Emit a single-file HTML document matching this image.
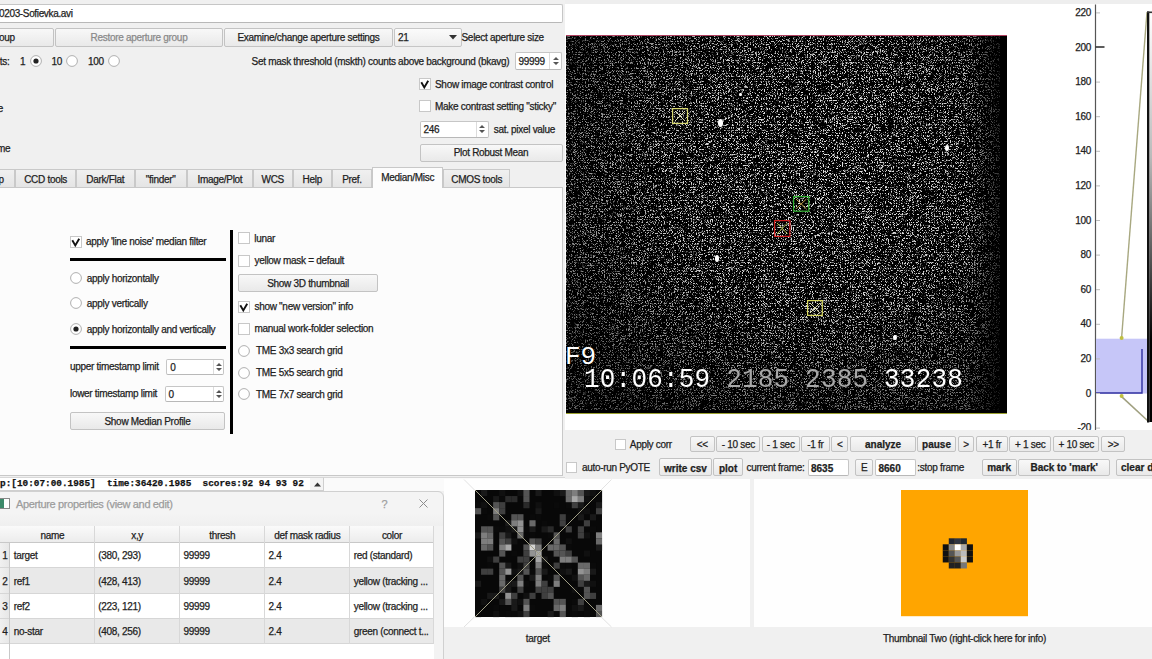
<!DOCTYPE html>
<html><head><meta charset="utf-8"><style>
html,body{margin:0;padding:0;}
body{width:1152px;height:659px;overflow:hidden;position:relative;background:#f0f0f0;font-family:"Liberation Sans",sans-serif;}
.r{position:absolute;}
.t{position:absolute;white-space:pre;line-height:1;-webkit-text-stroke:0.25px currentColor;}
svg.r{overflow:visible;}
</style></head><body>
<div class="r" style="left:0px;top:0px;width:565px;height:478px;background:#f0f0f0;"></div>
<div class="r" style="left:-3px;top:4px;width:566px;height:19px;box-sizing:border-box;border:1px solid #c6c6c6;border-bottom-color:#b8b8b8;border-radius:2px;background:#fff;"></div>
<div class="t" style="left:-1px;top:9.43px;font-size:10px;color:#1e1e1e;font-weight:normal;letter-spacing:-0.35px;font-family:"Liberation Sans", sans-serif;">0203-Sofievka.avi</div>
<div class="r" style="left:-10px;top:28px;width:64px;height:19px;box-sizing:border-box;border:1px solid #c3c3c3;border-radius:2px;background:linear-gradient(#f8f8f8,#e9e9e9);"></div>
<div class="t" style="left:-10px;width:64px;text-align:center;top:32.83px;font-size:10px;color:#1e1e1e;font-weight:normal;letter-spacing:-0.3px;"></div>
<div class="t" style="left:-1px;top:32.83px;font-size:10px;color:#1e1e1e;font-weight:normal;letter-spacing:-0.3px;font-family:"Liberation Sans", sans-serif;">oup</div>
<div class="r" style="left:0px;top:28px;width:54px;height:19px;display:none"></div>
<div class="r" style="left:55px;top:28px;width:168px;height:19px;box-sizing:border-box;border:1px solid #c3c3c3;border-radius:2px;background:linear-gradient(#f8f8f8,#e9e9e9);"></div>
<div class="t" style="left:55px;width:168px;text-align:center;top:32.83px;font-size:10px;color:#8a8a8a;font-weight:normal;letter-spacing:-0.3px;">Restore aperture group</div>
<div class="r" style="left:224px;top:28px;width:169px;height:19px;box-sizing:border-box;border:1px solid #c3c3c3;border-radius:2px;background:linear-gradient(#f8f8f8,#e9e9e9);"></div>
<div class="t" style="left:224px;width:169px;text-align:center;top:32.83px;font-size:10px;color:#1e1e1e;font-weight:normal;letter-spacing:-0.3px;">Examine/change aperture settings</div>
<div class="r" style="left:394px;top:28px;width:68px;height:19px;box-sizing:border-box;border:1px solid #c6c6c6;border-radius:2px;background:linear-gradient(#fbfbfb,#ededed);"></div>
<div class="t" style="left:398px;top:32.83px;font-size:10px;color:#1e1e1e;font-weight:normal;letter-spacing:-0.3px;font-family:"Liberation Sans", sans-serif;">21</div>
<svg class="r" style="left:449px;top:35px" width="8" height="5"><path d="M0 0 L8 0 L4 4.5 Z" fill="#333"/></svg>
<div class="t" style="left:461.5px;top:32.83px;font-size:10px;color:#1e1e1e;font-weight:normal;letter-spacing:-0.3px;font-family:"Liberation Sans", sans-serif;">Select aperture size</div>
<div class="t" style="left:-0.3px;top:56.63px;font-size:10px;color:#1e1e1e;font-weight:normal;letter-spacing:-0.3px;font-family:"Liberation Sans", sans-serif;">ts:</div>
<div class="t" style="left:20px;top:56.63px;font-size:10px;color:#1e1e1e;font-weight:normal;letter-spacing:-0.3px;font-family:"Liberation Sans", sans-serif;">1</div>
<svg class="r" style="left:29.6px;top:55px" width="12" height="12"><circle cx="6" cy="6" r="5.4" fill="#fff" stroke="#b0b0b0" stroke-width="1"/><circle cx="6" cy="6" r="2.6" fill="#222"/></svg>
<div class="t" style="left:51.5px;top:56.63px;font-size:10px;color:#1e1e1e;font-weight:normal;letter-spacing:-0.3px;font-family:"Liberation Sans", sans-serif;">10</div>
<svg class="r" style="left:66px;top:55px" width="12" height="12"><circle cx="6" cy="6" r="5.4" fill="#fff" stroke="#b0b0b0" stroke-width="1"/></svg>
<div class="t" style="left:88px;top:56.63px;font-size:10px;color:#1e1e1e;font-weight:normal;letter-spacing:-0.3px;font-family:"Liberation Sans", sans-serif;">100</div>
<svg class="r" style="left:107.7px;top:55px" width="12" height="12"><circle cx="6" cy="6" r="5.4" fill="#fff" stroke="#b0b0b0" stroke-width="1"/></svg>
<div class="t" style="left:251.6px;top:56.63px;font-size:10px;color:#1e1e1e;font-weight:normal;letter-spacing:-0.3px;font-family:"Liberation Sans", sans-serif;">Set mask threshold (mskth) counts above background (bkavg)</div>
<div class="r" style="left:514.5px;top:52px;width:47.5px;height:18px;box-sizing:border-box;border:1px solid #c6c6c6;border-bottom-color:#b8b8b8;border-radius:2px;background:#fff;"></div>
<div class="r" style="left:549px;top:53px;width:1px;height:16px;background:#dcdcdc;"></div>
<svg class="r" style="left:551.5px;top:56.0px" width="8" height="10"><path d="M1 4 L4 1 L7 4 Z M1 6 L4 9 L7 6 Z" fill="#555"/></svg>
<div class="t" style="left:518.5px;top:56.83px;font-size:10px;color:#1e1e1e;font-weight:normal;letter-spacing:-0.3px;font-family:"Liberation Sans", sans-serif;">99999</div>
<div class="r" style="left:419px;top:78px;width:12px;height:12px;box-sizing:border-box;border:1px solid #c8c8c8;background:#fff;"></div>
<svg class="r" style="left:419px;top:78px" width="12" height="12"><path d="M2.3 4.2 L5.3 9.4 L9.2 2.8" stroke="#111" stroke-width="1.9" fill="none"/></svg>
<div class="t" style="left:435px;top:79.73px;font-size:10px;color:#1e1e1e;font-weight:normal;letter-spacing:-0.3px;font-family:"Liberation Sans", sans-serif;">Show image contrast control</div>
<div class="t" style="left:-2.3px;top:103.94px;font-size:10px;color:#1e1e1e;font-weight:normal;letter-spacing:-0.3px;font-family:"Liberation Sans", sans-serif;">e</div>
<div class="r" style="left:419px;top:100px;width:12px;height:12px;box-sizing:border-box;border:1px solid #c8c8c8;background:#fff;"></div>
<div class="t" style="left:435px;top:102.03px;font-size:10px;color:#1e1e1e;font-weight:normal;letter-spacing:-0.3px;font-family:"Liberation Sans", sans-serif;">Make contrast setting "sticky"</div>
<div class="r" style="left:419.5px;top:120.5px;width:69.0px;height:17.0px;box-sizing:border-box;border:1px solid #c6c6c6;border-bottom-color:#b8b8b8;border-radius:2px;background:#fff;"></div>
<div class="r" style="left:476px;top:121.5px;width:1px;height:15.0px;background:#dcdcdc;"></div>
<svg class="r" style="left:478.2px;top:124.0px" width="8" height="10"><path d="M1 4 L4 1 L7 4 Z M1 6 L4 9 L7 6 Z" fill="#555"/></svg>
<div class="t" style="left:423.5px;top:124.84px;font-size:10px;color:#1e1e1e;font-weight:normal;letter-spacing:-0.3px;font-family:"Liberation Sans", sans-serif;">246</div>
<div class="t" style="left:493.7px;top:124.53px;font-size:10px;color:#1e1e1e;font-weight:normal;letter-spacing:-0.3px;font-family:"Liberation Sans", sans-serif;">sat. pixel value</div>
<div class="t" style="left:-3px;top:144.23px;font-size:10px;color:#1e1e1e;font-weight:normal;letter-spacing:-0.3px;font-family:"Liberation Sans", sans-serif;">me</div>
<div class="r" style="left:419.5px;top:144px;width:143.0px;height:17.5px;box-sizing:border-box;border:1px solid #c3c3c3;border-radius:2px;background:linear-gradient(#f8f8f8,#e9e9e9);"></div>
<div class="t" style="left:419.5px;width:143.0px;text-align:center;top:148.03px;font-size:10px;color:#1e1e1e;font-weight:normal;letter-spacing:-0.3px;">Plot Robust Mean</div>
<div class="r" style="left:-40px;top:169px;width:55.3px;height:18.5px;box-sizing:border-box;border:1px solid #c9c9c9;border-bottom:none;background:linear-gradient(#f0f0f0,#e4e4e4);"></div>
<div class="t" style="left:-40px;width:55.3px;text-align:center;top:174.63px;font-size:10px;color:#1e1e1e;font-weight:normal;letter-spacing:-0.3px;"></div>
<div class="r" style="left:15.3px;top:169px;width:60.7px;height:18.5px;box-sizing:border-box;border:1px solid #c9c9c9;border-bottom:none;background:linear-gradient(#f0f0f0,#e4e4e4);"></div>
<div class="t" style="left:15.3px;width:60.7px;text-align:center;top:174.63px;font-size:10px;color:#1e1e1e;font-weight:normal;letter-spacing:-0.3px;">CCD tools</div>
<div class="r" style="left:76px;top:169px;width:58.5px;height:18.5px;box-sizing:border-box;border:1px solid #c9c9c9;border-bottom:none;background:linear-gradient(#f0f0f0,#e4e4e4);"></div>
<div class="t" style="left:76px;width:58.5px;text-align:center;top:174.63px;font-size:10px;color:#1e1e1e;font-weight:normal;letter-spacing:-0.3px;">Dark/Flat</div>
<div class="r" style="left:134.5px;top:169px;width:52.30000000000001px;height:18.5px;box-sizing:border-box;border:1px solid #c9c9c9;border-bottom:none;background:linear-gradient(#f0f0f0,#e4e4e4);"></div>
<div class="t" style="left:134.5px;width:52.30000000000001px;text-align:center;top:174.63px;font-size:10px;color:#1e1e1e;font-weight:normal;letter-spacing:-0.3px;">"finder"</div>
<div class="r" style="left:186.8px;top:169px;width:66.19999999999999px;height:18.5px;box-sizing:border-box;border:1px solid #c9c9c9;border-bottom:none;background:linear-gradient(#f0f0f0,#e4e4e4);"></div>
<div class="t" style="left:186.8px;width:66.19999999999999px;text-align:center;top:174.63px;font-size:10px;color:#1e1e1e;font-weight:normal;letter-spacing:-0.3px;">Image/Plot</div>
<div class="r" style="left:253px;top:169px;width:39.5px;height:18.5px;box-sizing:border-box;border:1px solid #c9c9c9;border-bottom:none;background:linear-gradient(#f0f0f0,#e4e4e4);"></div>
<div class="t" style="left:253px;width:39.5px;text-align:center;top:174.63px;font-size:10px;color:#1e1e1e;font-weight:normal;letter-spacing:-0.3px;">WCS</div>
<div class="r" style="left:292.5px;top:169px;width:39.5px;height:18.5px;box-sizing:border-box;border:1px solid #c9c9c9;border-bottom:none;background:linear-gradient(#f0f0f0,#e4e4e4);"></div>
<div class="t" style="left:292.5px;width:39.5px;text-align:center;top:174.63px;font-size:10px;color:#1e1e1e;font-weight:normal;letter-spacing:-0.3px;">Help</div>
<div class="r" style="left:332px;top:169px;width:40px;height:18.5px;box-sizing:border-box;border:1px solid #c9c9c9;border-bottom:none;background:linear-gradient(#f0f0f0,#e4e4e4);"></div>
<div class="t" style="left:332px;width:40px;text-align:center;top:174.63px;font-size:10px;color:#1e1e1e;font-weight:normal;letter-spacing:-0.3px;">Pref.</div>
<div class="r" style="left:443.4px;top:169px;width:66.60000000000002px;height:18.5px;box-sizing:border-box;border:1px solid #c9c9c9;border-bottom:none;background:linear-gradient(#f0f0f0,#e4e4e4);"></div>
<div class="t" style="left:443.4px;width:66.60000000000002px;text-align:center;top:174.63px;font-size:10px;color:#1e1e1e;font-weight:normal;letter-spacing:-0.3px;">CMOS tools</div>
<div class="t" style="left:-1.5px;top:174.63px;font-size:10px;color:#1e1e1e;font-weight:normal;letter-spacing:-0.3px;font-family:"Liberation Sans", sans-serif;">p</div>
<div class="r" style="left:-2px;top:186.5px;width:564.5px;height:289.0px;box-sizing:border-box;border:1px solid #c8c8c8;background:#fcfcfc;"></div>
<div class="r" style="left:372px;top:167px;width:71.39999999999998px;height:21px;box-sizing:border-box;border:1px solid #c8c8c8;border-bottom:none;background:#fcfcfc;"></div>
<div class="t" style="left:372px;width:71.39999999999998px;text-align:center;top:173.13px;font-size:10px;color:#1e1e1e;font-weight:normal;letter-spacing:-0.3px;">Median/Misc</div>
<div class="r" style="left:70px;top:235.5px;width:12px;height:12.0px;box-sizing:border-box;border:1px solid #c8c8c8;background:#fff;"></div>
<svg class="r" style="left:70px;top:235.5px" width="12" height="12"><path d="M2.3 4.2 L5.3 9.4 L9.2 2.8" stroke="#111" stroke-width="1.9" fill="none"/></svg>
<div class="t" style="left:86px;top:237.13px;font-size:10px;color:#1e1e1e;font-weight:normal;letter-spacing:-0.3px;font-family:"Liberation Sans", sans-serif;">apply 'line noise' median filter</div>
<div class="r" style="left:70px;top:258px;width:155.5px;height:3px;background:#000;"></div>
<svg class="r" style="left:69.7px;top:272.2px" width="12" height="12"><circle cx="6" cy="6" r="5.4" fill="#fff" stroke="#b0b0b0" stroke-width="1"/></svg>
<div class="t" style="left:86.8px;top:273.84px;font-size:10px;color:#1e1e1e;font-weight:normal;letter-spacing:-0.3px;font-family:"Liberation Sans", sans-serif;">apply horizontally</div>
<svg class="r" style="left:69.7px;top:297.4px" width="12" height="12"><circle cx="6" cy="6" r="5.4" fill="#fff" stroke="#b0b0b0" stroke-width="1"/></svg>
<div class="t" style="left:86.8px;top:299.04px;font-size:10px;color:#1e1e1e;font-weight:normal;letter-spacing:-0.3px;font-family:"Liberation Sans", sans-serif;">apply vertically</div>
<svg class="r" style="left:69.7px;top:322.9px" width="12" height="12"><circle cx="6" cy="6" r="5.4" fill="#fff" stroke="#b0b0b0" stroke-width="1"/><circle cx="6" cy="6" r="2.6" fill="#222"/></svg>
<div class="t" style="left:86.8px;top:324.54px;font-size:10px;color:#1e1e1e;font-weight:normal;letter-spacing:-0.3px;font-family:"Liberation Sans", sans-serif;">apply horizontally and vertically</div>
<div class="r" style="left:70px;top:346px;width:155.5px;height:3px;background:#000;"></div>
<div class="t" style="left:70px;top:362.34px;font-size:10px;color:#1e1e1e;font-weight:normal;letter-spacing:-0.3px;font-family:"Liberation Sans", sans-serif;">upper timestamp limit</div>
<div class="r" style="left:166.3px;top:358.6px;width:58.19999999999999px;height:16.399999999999977px;box-sizing:border-box;border:1px solid #c6c6c6;border-bottom-color:#b8b8b8;border-radius:2px;background:#fff;"></div>
<div class="r" style="left:212.7px;top:359.6px;width:1.0px;height:14.399999999999977px;background:#dcdcdc;"></div>
<svg class="r" style="left:214.6px;top:361.8px" width="8" height="10"><path d="M1 4 L4 1 L7 4 Z M1 6 L4 9 L7 6 Z" fill="#555"/></svg>
<div class="t" style="left:170.3px;top:362.64px;font-size:10px;color:#1e1e1e;font-weight:normal;letter-spacing:-0.3px;font-family:"Liberation Sans", sans-serif;">0</div>
<div class="t" style="left:70px;top:389.24px;font-size:10px;color:#1e1e1e;font-weight:normal;letter-spacing:-0.3px;font-family:"Liberation Sans", sans-serif;">lower timestamp limit</div>
<div class="r" style="left:164.6px;top:385.6px;width:59.900000000000006px;height:16.19999999999999px;box-sizing:border-box;border:1px solid #c6c6c6;border-bottom-color:#b8b8b8;border-radius:2px;background:#fff;"></div>
<div class="r" style="left:212.7px;top:386.6px;width:1.0px;height:14.199999999999989px;background:#dcdcdc;"></div>
<svg class="r" style="left:214.6px;top:388.7px" width="8" height="10"><path d="M1 4 L4 1 L7 4 Z M1 6 L4 9 L7 6 Z" fill="#555"/></svg>
<div class="t" style="left:168.6px;top:389.54px;font-size:10px;color:#1e1e1e;font-weight:normal;letter-spacing:-0.3px;font-family:"Liberation Sans", sans-serif;">0</div>
<div class="r" style="left:70px;top:412px;width:155px;height:18px;box-sizing:border-box;border:1px solid #c3c3c3;border-radius:2px;background:linear-gradient(#f8f8f8,#e9e9e9);"></div>
<div class="t" style="left:70px;width:155px;text-align:center;top:416.64px;font-size:10px;color:#1e1e1e;font-weight:normal;letter-spacing:-0.3px;">Show Median Profile</div>
<div class="r" style="left:230.3px;top:230px;width:3.0px;height:204px;background:#000;"></div>
<div class="r" style="left:238px;top:232.3px;width:12px;height:12.0px;box-sizing:border-box;border:1px solid #c8c8c8;background:#fff;"></div>
<div class="t" style="left:254.3px;top:233.84px;font-size:10px;color:#1e1e1e;font-weight:normal;letter-spacing:-0.3px;font-family:"Liberation Sans", sans-serif;">lunar</div>
<div class="r" style="left:238px;top:254.5px;width:12px;height:12.0px;box-sizing:border-box;border:1px solid #c8c8c8;background:#fff;"></div>
<div class="t" style="left:254.5px;top:256.03px;font-size:10px;color:#1e1e1e;font-weight:normal;letter-spacing:-0.3px;font-family:"Liberation Sans", sans-serif;">yellow mask = default</div>
<div class="r" style="left:238px;top:274.4px;width:140px;height:17.80000000000001px;box-sizing:border-box;border:1px solid #c3c3c3;border-radius:2px;background:linear-gradient(#f8f8f8,#e9e9e9);"></div>
<div class="t" style="left:238px;width:140px;text-align:center;top:279.04px;font-size:10px;color:#1e1e1e;font-weight:normal;letter-spacing:-0.3px;">Show 3D thumbnail</div>
<div class="r" style="left:238px;top:300.5px;width:12px;height:12.0px;box-sizing:border-box;border:1px solid #c8c8c8;background:#fff;"></div>
<svg class="r" style="left:238px;top:300.5px" width="12" height="12"><path d="M2.3 4.2 L5.3 9.4 L9.2 2.8" stroke="#111" stroke-width="1.9" fill="none"/></svg>
<div class="t" style="left:254.5px;top:301.84px;font-size:10px;color:#1e1e1e;font-weight:normal;letter-spacing:-0.3px;font-family:"Liberation Sans", sans-serif;">show "new version" info</div>
<div class="r" style="left:238px;top:322.7px;width:12px;height:12.0px;box-sizing:border-box;border:1px solid #c8c8c8;background:#fff;"></div>
<div class="t" style="left:254.5px;top:324.04px;font-size:10px;color:#1e1e1e;font-weight:normal;letter-spacing:-0.3px;font-family:"Liberation Sans", sans-serif;">manual work-folder selection</div>
<svg class="r" style="left:237.8px;top:344.5px" width="12" height="12"><circle cx="6" cy="6" r="5.4" fill="#fff" stroke="#b0b0b0" stroke-width="1"/></svg>
<div class="t" style="left:256px;top:346.24px;font-size:10px;color:#1e1e1e;font-weight:normal;letter-spacing:-0.3px;font-family:"Liberation Sans", sans-serif;">TME 3x3 search grid</div>
<svg class="r" style="left:237.8px;top:366.5px" width="12" height="12"><circle cx="6" cy="6" r="5.4" fill="#fff" stroke="#b0b0b0" stroke-width="1"/></svg>
<div class="t" style="left:256px;top:368.24px;font-size:10px;color:#1e1e1e;font-weight:normal;letter-spacing:-0.3px;font-family:"Liberation Sans", sans-serif;">TME 5x5 search grid</div>
<svg class="r" style="left:237.8px;top:388.2px" width="12" height="12"><circle cx="6" cy="6" r="5.4" fill="#fff" stroke="#b0b0b0" stroke-width="1"/></svg>
<div class="t" style="left:256px;top:389.94px;font-size:10px;color:#1e1e1e;font-weight:normal;letter-spacing:-0.3px;font-family:"Liberation Sans", sans-serif;">TME 7x7 search grid</div>
<div class="r" style="left:0px;top:476px;width:565px;height:183px;background:#f0f0f0;"></div>
<div class="r" style="left:-2px;top:477px;width:326px;height:14px;box-sizing:border-box;border:1px solid #cfcfcf;border-top-color:#d8d8d8;background:#fff;"></div>
<div class="r" style="left:0;top:477px;width:312px;height:13px;overflow:hidden;"><div class="t" style="left:0;top:1.5px;font-family:'Liberation Mono',monospace;font-weight:bold;font-size:9.4px;color:#111;white-space:pre;">p:[10:07:00.1985]  time:36420.1985  scores:92 94 93 92</div></div>
<div class="r" style="left:310px;top:478px;width:13px;height:12px;background:#f4f4f4;"></div>
<svg class="r" style="left:313.5px;top:482px" width="7" height="5"><path d="M0 4.5 L3.5 0.5 L7 4.5 Z" fill="#333"/></svg>
<div class="r" style="left:324px;top:477px;width:241px;height:14px;background:#fafafa;border-top:1px solid #d8d8d8;box-sizing:border-box;"></div>
<div class="r" style="left:-5px;top:491px;width:449px;height:174px;box-sizing:border-box;border:1px solid #d0d0d0;border-radius:6px;background:linear-gradient(#f4f4f4 0,#f4f4f4 21px,#efefef 35px);"></div>
<div class="r" style="left:-2px;top:497.5px;width:12px;height:11.0px;box-sizing:border-box;border:1px solid #888;background:linear-gradient(90deg,#3d8a6a 0,#3d8a6a 55%,#fff 55%);"></div>
<div class="t" style="left:16px;top:498.59px;font-size:11px;color:#9c9c9c;font-weight:normal;letter-spacing:-0.35px;font-family:"Liberation Sans", sans-serif;">Aperture properties (view and edit)</div>
<div class="t" style="left:381.5px;top:498.69px;font-size:11px;color:#a0a0a0;font-weight:normal;letter-spacing:0px;font-family:"Liberation Sans", sans-serif;">?</div>
<svg class="r" style="left:419px;top:498.5px" width="9" height="9"><path d="M0.5 0.5 L8.5 8.5 M8.5 0.5 L0.5 8.5" stroke="#8c8c8c" stroke-width="1"/></svg>
<div class="r" style="left:-2px;top:526px;width:436px;height:133px;background:#fff;"></div>
<div class="r" style="left:-2px;top:526px;width:436px;height:17px;background:linear-gradient(#fafafa,#ececec);border-bottom:1px solid #c8c8c8;box-sizing:border-box;"></div>
<div class="r" style="left:93.6px;top:526px;width:1.0px;height:17px;background:#d8d8d8;"></div>
<div class="t" style="left:10px;width:84.6px;text-align:center;top:530.53px;font-size:10px;color:#1e1e1e;font-weight:normal;letter-spacing:-0.3px;">name</div>
<div class="r" style="left:178.7px;top:526px;width:1.0px;height:17px;background:#d8d8d8;"></div>
<div class="t" style="left:94.6px;width:85.1px;text-align:center;top:530.53px;font-size:10px;color:#1e1e1e;font-weight:normal;letter-spacing:-0.3px;">x,y</div>
<div class="r" style="left:263.8px;top:526px;width:1.0px;height:17px;background:#d8d8d8;"></div>
<div class="t" style="left:179.7px;width:85.10000000000002px;text-align:center;top:530.53px;font-size:10px;color:#1e1e1e;font-weight:normal;letter-spacing:-0.3px;">thresh</div>
<div class="r" style="left:349px;top:526px;width:1px;height:17px;background:#d8d8d8;"></div>
<div class="t" style="left:264.8px;width:85.19999999999999px;text-align:center;top:530.53px;font-size:10px;color:#1e1e1e;font-weight:normal;letter-spacing:-0.3px;">def mask radius</div>
<div class="r" style="left:433px;top:526px;width:1px;height:17px;background:#d8d8d8;"></div>
<div class="t" style="left:350px;width:84px;text-align:center;top:530.53px;font-size:10px;color:#1e1e1e;font-weight:normal;letter-spacing:-0.3px;">color</div>
<div class="r" style="left:10px;top:543px;width:424px;height:25.299999999999955px;background:#ffffff;"></div>
<div class="r" style="left:-2px;top:543px;width:12px;height:25.299999999999955px;background:linear-gradient(90deg,#f2f2f2,#e6e6e6);"></div>
<div class="r" style="left:-2px;top:567.3px;width:436px;height:1.0px;background:#d6d6d6;"></div>
<div class="r" style="left:93.6px;top:543px;width:1.0px;height:25.299999999999955px;background:#d8d8d8;"></div>
<div class="r" style="left:178.7px;top:543px;width:1.0px;height:25.299999999999955px;background:#d8d8d8;"></div>
<div class="r" style="left:263.8px;top:543px;width:1.0px;height:25.299999999999955px;background:#d8d8d8;"></div>
<div class="r" style="left:349px;top:543px;width:1px;height:25.299999999999955px;background:#d8d8d8;"></div>
<div class="r" style="left:433px;top:543px;width:1px;height:25.299999999999955px;background:#d8d8d8;"></div>
<div class="t" style="left:0px;width:10px;text-align:center;top:551.48px;font-size:10px;color:#1e1e1e;font-weight:normal;letter-spacing:-0.3px;">1</div>
<div class="t" style="left:13.7px;top:551.48px;font-size:10px;color:#1e1e1e;font-weight:normal;letter-spacing:-0.3px;font-family:"Liberation Sans", sans-serif;">target</div>
<div class="t" style="left:98.3px;top:551.48px;font-size:10px;color:#1e1e1e;font-weight:normal;letter-spacing:-0.3px;font-family:"Liberation Sans", sans-serif;">(380, 293)</div>
<div class="t" style="left:183.39999999999998px;top:551.48px;font-size:10px;color:#1e1e1e;font-weight:normal;letter-spacing:-0.3px;font-family:"Liberation Sans", sans-serif;">99999</div>
<div class="t" style="left:268.5px;top:551.48px;font-size:10px;color:#1e1e1e;font-weight:normal;letter-spacing:-0.3px;font-family:"Liberation Sans", sans-serif;">2.4</div>
<div class="t" style="left:353.7px;top:551.48px;font-size:10px;color:#1e1e1e;font-weight:normal;letter-spacing:-0.3px;font-family:"Liberation Sans", sans-serif;">red (standard)</div>
<div class="r" style="left:10px;top:568.3px;width:424px;height:25.600000000000023px;background:#e9e9e9;"></div>
<div class="r" style="left:-2px;top:568.3px;width:12px;height:25.600000000000023px;background:linear-gradient(90deg,#f2f2f2,#e6e6e6);"></div>
<div class="r" style="left:-2px;top:592.9px;width:436px;height:1.0px;background:#d6d6d6;"></div>
<div class="r" style="left:93.6px;top:568.3px;width:1.0px;height:25.600000000000023px;background:#d8d8d8;"></div>
<div class="r" style="left:178.7px;top:568.3px;width:1.0px;height:25.600000000000023px;background:#d8d8d8;"></div>
<div class="r" style="left:263.8px;top:568.3px;width:1.0px;height:25.600000000000023px;background:#d8d8d8;"></div>
<div class="r" style="left:349px;top:568.3px;width:1px;height:25.600000000000023px;background:#d8d8d8;"></div>
<div class="r" style="left:433px;top:568.3px;width:1px;height:25.600000000000023px;background:#d8d8d8;"></div>
<div class="t" style="left:0px;width:10px;text-align:center;top:576.93px;font-size:10px;color:#1e1e1e;font-weight:normal;letter-spacing:-0.3px;">2</div>
<div class="t" style="left:13.7px;top:576.93px;font-size:10px;color:#1e1e1e;font-weight:normal;letter-spacing:-0.3px;font-family:"Liberation Sans", sans-serif;">ref1</div>
<div class="t" style="left:98.3px;top:576.93px;font-size:10px;color:#1e1e1e;font-weight:normal;letter-spacing:-0.3px;font-family:"Liberation Sans", sans-serif;">(428, 413)</div>
<div class="t" style="left:183.39999999999998px;top:576.93px;font-size:10px;color:#1e1e1e;font-weight:normal;letter-spacing:-0.3px;font-family:"Liberation Sans", sans-serif;">99999</div>
<div class="t" style="left:268.5px;top:576.93px;font-size:10px;color:#1e1e1e;font-weight:normal;letter-spacing:-0.3px;font-family:"Liberation Sans", sans-serif;">2.4</div>
<div class="t" style="left:353.7px;top:576.93px;font-size:10px;color:#1e1e1e;font-weight:normal;letter-spacing:-0.3px;font-family:"Liberation Sans", sans-serif;">yellow (tracking ...</div>
<div class="r" style="left:10px;top:593.9px;width:424px;height:24.800000000000068px;background:#ffffff;"></div>
<div class="r" style="left:-2px;top:593.9px;width:12px;height:24.800000000000068px;background:linear-gradient(90deg,#f2f2f2,#e6e6e6);"></div>
<div class="r" style="left:-2px;top:617.7px;width:436px;height:1.0px;background:#d6d6d6;"></div>
<div class="r" style="left:93.6px;top:593.9px;width:1.0px;height:24.800000000000068px;background:#d8d8d8;"></div>
<div class="r" style="left:178.7px;top:593.9px;width:1.0px;height:24.800000000000068px;background:#d8d8d8;"></div>
<div class="r" style="left:263.8px;top:593.9px;width:1.0px;height:24.800000000000068px;background:#d8d8d8;"></div>
<div class="r" style="left:349px;top:593.9px;width:1px;height:24.800000000000068px;background:#d8d8d8;"></div>
<div class="r" style="left:433px;top:593.9px;width:1px;height:24.800000000000068px;background:#d8d8d8;"></div>
<div class="t" style="left:0px;width:10px;text-align:center;top:602.13px;font-size:10px;color:#1e1e1e;font-weight:normal;letter-spacing:-0.3px;">3</div>
<div class="t" style="left:13.7px;top:602.13px;font-size:10px;color:#1e1e1e;font-weight:normal;letter-spacing:-0.3px;font-family:"Liberation Sans", sans-serif;">ref2</div>
<div class="t" style="left:98.3px;top:602.13px;font-size:10px;color:#1e1e1e;font-weight:normal;letter-spacing:-0.3px;font-family:"Liberation Sans", sans-serif;">(223, 121)</div>
<div class="t" style="left:183.39999999999998px;top:602.13px;font-size:10px;color:#1e1e1e;font-weight:normal;letter-spacing:-0.3px;font-family:"Liberation Sans", sans-serif;">99999</div>
<div class="t" style="left:268.5px;top:602.13px;font-size:10px;color:#1e1e1e;font-weight:normal;letter-spacing:-0.3px;font-family:"Liberation Sans", sans-serif;">2.4</div>
<div class="t" style="left:353.7px;top:602.13px;font-size:10px;color:#1e1e1e;font-weight:normal;letter-spacing:-0.3px;font-family:"Liberation Sans", sans-serif;">yellow (tracking ...</div>
<div class="r" style="left:10px;top:618.7px;width:424px;height:25.299999999999955px;background:#e9e9e9;"></div>
<div class="r" style="left:-2px;top:618.7px;width:12px;height:25.299999999999955px;background:linear-gradient(90deg,#f2f2f2,#e6e6e6);"></div>
<div class="r" style="left:-2px;top:643px;width:436px;height:1px;background:#d6d6d6;"></div>
<div class="r" style="left:93.6px;top:618.7px;width:1.0px;height:25.299999999999955px;background:#d8d8d8;"></div>
<div class="r" style="left:178.7px;top:618.7px;width:1.0px;height:25.299999999999955px;background:#d8d8d8;"></div>
<div class="r" style="left:263.8px;top:618.7px;width:1.0px;height:25.299999999999955px;background:#d8d8d8;"></div>
<div class="r" style="left:349px;top:618.7px;width:1px;height:25.299999999999955px;background:#d8d8d8;"></div>
<div class="r" style="left:433px;top:618.7px;width:1px;height:25.299999999999955px;background:#d8d8d8;"></div>
<div class="t" style="left:0px;width:10px;text-align:center;top:627.18px;font-size:10px;color:#1e1e1e;font-weight:normal;letter-spacing:-0.3px;">4</div>
<div class="t" style="left:13.7px;top:627.18px;font-size:10px;color:#1e1e1e;font-weight:normal;letter-spacing:-0.3px;font-family:"Liberation Sans", sans-serif;">no-star</div>
<div class="t" style="left:98.3px;top:627.18px;font-size:10px;color:#1e1e1e;font-weight:normal;letter-spacing:-0.3px;font-family:"Liberation Sans", sans-serif;">(408, 256)</div>
<div class="t" style="left:183.39999999999998px;top:627.18px;font-size:10px;color:#1e1e1e;font-weight:normal;letter-spacing:-0.3px;font-family:"Liberation Sans", sans-serif;">99999</div>
<div class="t" style="left:268.5px;top:627.18px;font-size:10px;color:#1e1e1e;font-weight:normal;letter-spacing:-0.3px;font-family:"Liberation Sans", sans-serif;">2.4</div>
<div class="t" style="left:353.7px;top:627.18px;font-size:10px;color:#1e1e1e;font-weight:normal;letter-spacing:-0.3px;font-family:"Liberation Sans", sans-serif;">green (connect t...</div>
<div class="r" style="left:9px;top:543px;width:1px;height:116px;background:#c8c8c8;"></div>
<div class="r" style="left:434px;top:526px;width:9px;height:133px;background:#f3f3f3;"></div>
<div class="r" style="left:443px;top:500px;width:1px;height:159px;background:#d0d0d0;"></div>
<div class="r" style="left:565px;top:0px;width:587px;height:430px;background:#fff;"></div>
<div class="r" style="left:565px;top:0px;width:587px;height:4px;background:#eeeeee;"></div>
<svg class="r" style="left:566px;top:35px" width="440.5" height="379" shape-rendering="crispEdges">
<defs>
<filter id="nz" x="0" y="0" width="100%" height="100%" filterUnits="userSpaceOnUse" color-interpolation-filters="sRGB">
<feTurbulence type="turbulence" baseFrequency="0.63" numOctaves="2" seed="5"/>
<feColorMatrix type="matrix" values="0 0 0 0 0.92  0 0 0 0 0.92  0 0 0 0 0.92  5 0 0 0 -1.47"/>
</filter>
<radialGradient id="vg" cx="0.58" cy="0.38" r="0.72">
<stop offset="0" stop-color="#000" stop-opacity="0"/>
<stop offset="0.5" stop-color="#000" stop-opacity="0.12"/>
<stop offset="1" stop-color="#000" stop-opacity="0.6"/>
</radialGradient>
<linearGradient id="rgt" x1="0" y1="0" x2="1" y2="0"><stop offset="0" stop-color="#000" stop-opacity="0"/><stop offset="1" stop-color="#000" stop-opacity="0.75"/></linearGradient>
</defs>
<rect width="440.5" height="379" fill="#000"/>
<rect width="440.5" height="379" filter="url(#nz)"/>
<rect width="440.5" height="379" fill="url(#vg)"/>
<rect x="400.5" y="0" width="33" height="379" fill="url(#rgt)"/>
<rect x="433.5" y="0" width="7" height="379" fill="#000"/>
<rect x="0" y="0" width="440.5" height="1" fill="#b04060"/>
<rect x="0" y="375" width="440.5" height="3" fill="#000"/>
<rect x="0" y="378" width="440.5" height="1" fill="#9aa030"/>
</svg>
<div class="r" style="left:718.1px;top:119.0px;width:5.1px;height:7.5px;border-radius:50%;background:#fff;"></div>
<div class="r" style="left:945.1px;top:144.5px;width:4.2px;height:6.2px;border-radius:50%;background:#fff;"></div>
<div class="r" style="left:714.5px;top:254.9px;width:4.8px;height:7.0px;border-radius:50%;background:#fff;"></div>
<div class="r" style="left:892.9px;top:334.6px;width:3.9px;height:5.8px;border-radius:50%;background:#fff;"></div>
<div class="r" style="left:739.4px;top:92.9px;width:2.2px;height:3.2px;border-radius:50%;background:#fff;"></div>
<svg class="r" style="left:671.7px;top:107.5px" width="16.09999999999991" height="16.0"><rect x="0.6" y="0.6" width="14.89999999999991" height="14.8" fill="none" stroke="#d8d870" stroke-width="1.2"/><path d="M3 3 L13.099999999999909 13.0 M13.099999999999909 3 L3 13.0" stroke="#e8e8c0" stroke-width="1"/></svg>
<svg class="r" style="left:793.3px;top:196px" width="16.40000000000009" height="15.800000000000011"><rect x="0.6" y="0.6" width="15.200000000000092" height="14.600000000000012" fill="none" stroke="#30b030" stroke-width="1.2"/><path d="M3 3 L13.400000000000091 12.800000000000011 M13.400000000000091 3 L3 12.800000000000011" stroke="#c0a050" stroke-width="1"/></svg>
<svg class="r" style="left:774px;top:220px" width="16.5" height="17"><rect x="0.6" y="0.6" width="15.3" height="15.8" fill="none" stroke="#d02020" stroke-width="1.2"/><path d="M3 3 L13.5 14 M13.5 3 L3 14" stroke="#b0c050" stroke-width="1"/></svg>
<svg class="r" style="left:806.5px;top:299.6px" width="15.899999999999977" height="16.0"><rect x="0.6" y="0.6" width="14.699999999999978" height="14.8" fill="none" stroke="#d8d860" stroke-width="1.2"/><path d="M3 3 L12.899999999999977 13.0 M12.899999999999977 3 L3 13.0" stroke="#e0e0b0" stroke-width="1"/></svg>
<div class="t" style="left:565px;top:343.5px;font-family:'Liberation Mono', monospace;font-size:26px;color:#fff;letter-spacing:0px;-webkit-text-stroke:0px #fff;text-shadow:0 0 1.5px #000,0 0 1px #000;transform:scaleY(1.0);transform-origin:0 0;">F9</div>
<div class="t" style="left:584px;top:365.6px;font-family:'Liberation Mono', monospace;font-size:26px;color:#fff;letter-spacing:0.19px;-webkit-text-stroke:0px #fff;text-shadow:0 0 1.5px #000,0 0 1px #000;white-space:pre;transform:scaleY(1.065);transform-origin:0 0;">10:06:59 <span style="color:#a8a8a8;-webkit-text-stroke:0px #a8a8a8">2185 2385</span> 33238</div>
<svg class="r" style="left:1040px;top:0" width="112" height="432">
<line x1="55.5" y1="4.5" x2="55.5" y2="432" stroke="#555" stroke-width="1.2"/>
<line x1="55.5" y1="47" x2="64.5" y2="47" stroke="#333" stroke-width="1.6"/>
<rect x="56" y="338.7" width="51" height="54.8" fill="#c6c6f8"/>
<path d="M56 393 L102 393 L102 349" stroke="#3030a0" stroke-width="1.4" fill="none"/>
<path d="M107 12 L81.6 337.8" stroke="#a8a880" stroke-width="1.4" fill="none"/>
<path d="M81.6 396.7 L108 421" stroke="#a0a080" stroke-width="1.6" fill="none"/>
<circle cx="81.6" cy="338" r="2" fill="#c0c040"/>
<circle cx="81.6" cy="396" r="2" fill="#c0c040"/>
<defs><linearGradient id="rg" x1="0" y1="0" x2="0" y2="1"><stop offset="0" stop-color="#fff"/><stop offset="0.35" stop-color="#bbb"/><stop offset="0.6" stop-color="#555"/><stop offset="0.8" stop-color="#000"/></linearGradient></defs>
<rect x="109.3" y="13" width="2.7" height="409" fill="url(#rg)"/>
<rect x="107" y="11.5" width="2.3" height="411" fill="#111"/>
<rect x="107" y="11.5" width="5" height="1.6" fill="#333"/>

<line x1="56" y1="12.9" x2="60" y2="12.9" stroke="#bbb" stroke-width="1"/>
<line x1="56" y1="82.1" x2="60" y2="82.1" stroke="#bbb" stroke-width="1"/>
<line x1="56" y1="116.7" x2="60" y2="116.7" stroke="#bbb" stroke-width="1"/>
<line x1="56" y1="151.3" x2="60" y2="151.3" stroke="#bbb" stroke-width="1"/>
<line x1="56" y1="185.9" x2="60" y2="185.9" stroke="#bbb" stroke-width="1"/>
<line x1="56" y1="220.5" x2="60" y2="220.5" stroke="#bbb" stroke-width="1"/>
<line x1="56" y1="255.1" x2="60" y2="255.1" stroke="#bbb" stroke-width="1"/>
<line x1="56" y1="289.7" x2="60" y2="289.7" stroke="#bbb" stroke-width="1"/>
<line x1="56" y1="324.3" x2="60" y2="324.3" stroke="#bbb" stroke-width="1"/>
<line x1="56" y1="358.9" x2="60" y2="358.9" stroke="#bbb" stroke-width="1"/>
<line x1="56" y1="393.5" x2="60" y2="393.5" stroke="#bbb" stroke-width="1"/>
<line x1="56" y1="428.1" x2="60" y2="428.1" stroke="#bbb" stroke-width="1"/>
</svg>
<div class="t" style="left:1040px;width:51px;text-align:right;top:8.0px;font-size:10px;color:#222;letter-spacing:-0.3px;">220</div>
<div class="t" style="left:1040px;width:51px;text-align:right;top:42.6px;font-size:10px;color:#222;letter-spacing:-0.3px;">200</div>
<div class="t" style="left:1040px;width:51px;text-align:right;top:77.2px;font-size:10px;color:#222;letter-spacing:-0.3px;">180</div>
<div class="t" style="left:1040px;width:51px;text-align:right;top:111.8px;font-size:10px;color:#222;letter-spacing:-0.3px;">160</div>
<div class="t" style="left:1040px;width:51px;text-align:right;top:146.4px;font-size:10px;color:#222;letter-spacing:-0.3px;">140</div>
<div class="t" style="left:1040px;width:51px;text-align:right;top:181.0px;font-size:10px;color:#222;letter-spacing:-0.3px;">120</div>
<div class="t" style="left:1040px;width:51px;text-align:right;top:215.6px;font-size:10px;color:#222;letter-spacing:-0.3px;">100</div>
<div class="t" style="left:1040px;width:51px;text-align:right;top:250.2px;font-size:10px;color:#222;letter-spacing:-0.3px;">80</div>
<div class="t" style="left:1040px;width:51px;text-align:right;top:284.8px;font-size:10px;color:#222;letter-spacing:-0.3px;">60</div>
<div class="t" style="left:1040px;width:51px;text-align:right;top:319.4px;font-size:10px;color:#222;letter-spacing:-0.3px;">40</div>
<div class="t" style="left:1040px;width:51px;text-align:right;top:354.0px;font-size:10px;color:#222;letter-spacing:-0.3px;">20</div>
<div class="t" style="left:1040px;width:51px;text-align:right;top:388.6px;font-size:10px;color:#222;letter-spacing:-0.3px;">0</div>
<div class="t" style="left:1040px;width:51px;text-align:right;top:423.2px;font-size:10px;color:#222;letter-spacing:-0.3px;">-20</div>
<div class="r" style="left:565px;top:430px;width:587px;height:48.60000000000002px;background:#f0f0f0;"></div>
<div class="r" style="left:561.5px;top:430px;width:1.0px;height:46px;background:#d0d0d0;display:none;"></div>
<div class="r" style="left:614.5px;top:438.8px;width:11.0px;height:11.0px;box-sizing:border-box;border:1px solid #c8c8c8;background:#fff;"></div>
<div class="t" style="left:629.8px;top:440.04px;font-size:10px;color:#1e1e1e;font-weight:normal;letter-spacing:-0.3px;font-family:"Liberation Sans", sans-serif;">Apply corr</div>
<div class="r" style="left:690.2px;top:435.9px;width:24.399999999999977px;height:16.5px;box-sizing:border-box;border:1px solid #c3c3c3;border-radius:2px;background:linear-gradient(#f8f8f8,#e9e9e9);"></div>
<div class="t" style="left:690.2px;width:24.399999999999977px;text-align:center;top:440.04px;font-size:10px;color:#1e1e1e;font-weight:normal;letter-spacing:-0.3px;">&lt;&lt;</div>
<div class="r" style="left:716.3px;top:435.9px;width:44.10000000000002px;height:16.5px;box-sizing:border-box;border:1px solid #c3c3c3;border-radius:2px;background:linear-gradient(#f8f8f8,#e9e9e9);"></div>
<div class="t" style="left:716.3px;width:44.10000000000002px;text-align:center;top:440.04px;font-size:10px;color:#1e1e1e;font-weight:normal;letter-spacing:-0.3px;">- 10 sec</div>
<div class="r" style="left:761.7px;top:435.9px;width:37.89999999999998px;height:16.5px;box-sizing:border-box;border:1px solid #c3c3c3;border-radius:2px;background:linear-gradient(#f8f8f8,#e9e9e9);"></div>
<div class="t" style="left:761.7px;width:37.89999999999998px;text-align:center;top:440.04px;font-size:10px;color:#1e1e1e;font-weight:normal;letter-spacing:-0.3px;">- 1 sec</div>
<div class="r" style="left:801px;top:435.9px;width:28.799999999999955px;height:16.5px;box-sizing:border-box;border:1px solid #c3c3c3;border-radius:2px;background:linear-gradient(#f8f8f8,#e9e9e9);"></div>
<div class="t" style="left:801px;width:28.799999999999955px;text-align:center;top:440.04px;font-size:10px;color:#1e1e1e;font-weight:normal;letter-spacing:-0.3px;">-1 fr</div>
<div class="r" style="left:831.2px;top:435.9px;width:17.299999999999955px;height:16.5px;box-sizing:border-box;border:1px solid #c3c3c3;border-radius:2px;background:linear-gradient(#f8f8f8,#e9e9e9);"></div>
<div class="t" style="left:831.2px;width:17.299999999999955px;text-align:center;top:440.04px;font-size:10px;color:#1e1e1e;font-weight:normal;letter-spacing:-0.3px;">&lt;</div>
<div class="r" style="left:850px;top:435.9px;width:66.20000000000005px;height:16.5px;box-sizing:border-box;border:1px solid #c3c3c3;border-radius:2px;background:linear-gradient(#f8f8f8,#e9e9e9);"></div>
<div class="t" style="left:850px;width:66.20000000000005px;text-align:center;top:440.04px;font-size:10px;color:#1e1e1e;font-weight:bold;letter-spacing:0px;">analyze</div>
<div class="r" style="left:917.3px;top:435.9px;width:38.5px;height:16.5px;box-sizing:border-box;border:1px solid #c3c3c3;border-radius:2px;background:linear-gradient(#f8f8f8,#e9e9e9);"></div>
<div class="t" style="left:917.3px;width:38.5px;text-align:center;top:440.04px;font-size:10px;color:#1e1e1e;font-weight:bold;letter-spacing:0px;">pause</div>
<div class="r" style="left:957.7px;top:435.9px;width:16.699999999999932px;height:16.5px;box-sizing:border-box;border:1px solid #c3c3c3;border-radius:2px;background:linear-gradient(#f8f8f8,#e9e9e9);"></div>
<div class="t" style="left:957.7px;width:16.699999999999932px;text-align:center;top:440.04px;font-size:10px;color:#1e1e1e;font-weight:normal;letter-spacing:-0.3px;">&gt;</div>
<div class="r" style="left:976px;top:435.9px;width:31.899999999999977px;height:16.5px;box-sizing:border-box;border:1px solid #c3c3c3;border-radius:2px;background:linear-gradient(#f8f8f8,#e9e9e9);"></div>
<div class="t" style="left:976px;width:31.899999999999977px;text-align:center;top:440.04px;font-size:10px;color:#1e1e1e;font-weight:normal;letter-spacing:-0.3px;">+1 fr</div>
<div class="r" style="left:1009.3px;top:435.9px;width:42.0px;height:16.5px;box-sizing:border-box;border:1px solid #c3c3c3;border-radius:2px;background:linear-gradient(#f8f8f8,#e9e9e9);"></div>
<div class="t" style="left:1009.3px;width:42.0px;text-align:center;top:440.04px;font-size:10px;color:#1e1e1e;font-weight:normal;letter-spacing:-0.3px;">+ 1 sec</div>
<div class="r" style="left:1053.1px;top:435.9px;width:46.30000000000018px;height:16.5px;box-sizing:border-box;border:1px solid #c3c3c3;border-radius:2px;background:linear-gradient(#f8f8f8,#e9e9e9);"></div>
<div class="t" style="left:1053.1px;width:46.30000000000018px;text-align:center;top:440.04px;font-size:10px;color:#1e1e1e;font-weight:normal;letter-spacing:-0.3px;">+ 10 sec</div>
<div class="r" style="left:1101.1px;top:435.9px;width:24.200000000000045px;height:16.5px;box-sizing:border-box;border:1px solid #c3c3c3;border-radius:2px;background:linear-gradient(#f8f8f8,#e9e9e9);"></div>
<div class="t" style="left:1101.1px;width:24.200000000000045px;text-align:center;top:440.04px;font-size:10px;color:#1e1e1e;font-weight:normal;letter-spacing:-0.3px;">&gt;&gt;</div>
<div class="r" style="left:566.2px;top:462.3px;width:11.0px;height:11.0px;box-sizing:border-box;border:1px solid #c8c8c8;background:#fff;"></div>
<div class="t" style="left:581.9px;top:463.34px;font-size:10px;color:#1e1e1e;font-weight:normal;letter-spacing:-0.3px;font-family:"Liberation Sans", sans-serif;">auto-run PyOTE</div>
<div class="r" style="left:659px;top:458.3px;width:53px;height:17.30000000000001px;box-sizing:border-box;border:1px solid #c3c3c3;border-radius:2px;background:linear-gradient(#f8f8f8,#e9e9e9);"></div>
<div class="t" style="left:659px;width:53px;text-align:center;top:463.54px;font-size:10px;color:#1e1e1e;font-weight:bold;letter-spacing:0px;">write csv</div>
<div class="r" style="left:713px;top:458.3px;width:30.299999999999955px;height:17.30000000000001px;box-sizing:border-box;border:1px solid #c3c3c3;border-radius:2px;background:linear-gradient(#f8f8f8,#e9e9e9);"></div>
<div class="t" style="left:713px;width:30.299999999999955px;text-align:center;top:463.54px;font-size:10px;color:#1e1e1e;font-weight:bold;letter-spacing:0px;">plot</div>
<div class="t" style="left:746.5px;top:463.34px;font-size:10px;color:#1e1e1e;font-weight:normal;letter-spacing:-0.3px;font-family:"Liberation Sans", sans-serif;">current frame:</div>
<div class="r" style="left:807.5px;top:459.4px;width:41.0px;height:16.80000000000001px;box-sizing:border-box;border:1px solid #c6c6c6;border-bottom-color:#b8b8b8;border-radius:2px;background:#fff;"></div>
<div class="t" style="left:811px;top:463.54px;font-size:10px;color:#1e1e1e;font-weight:bold;letter-spacing:0px;font-family:"Liberation Sans", sans-serif;">8635</div>
<div class="r" style="left:854.8px;top:458.7px;width:18.700000000000045px;height:17.30000000000001px;box-sizing:border-box;border:1px solid #c3c3c3;border-radius:2px;background:linear-gradient(#f8f8f8,#e9e9e9);"></div>
<div class="t" style="left:854.8px;width:18.700000000000045px;text-align:center;top:463.34px;font-size:10px;color:#1e1e1e;font-weight:normal;letter-spacing:-0.3px;">E</div>
<div class="r" style="left:875px;top:459.4px;width:41.200000000000045px;height:16.80000000000001px;box-sizing:border-box;border:1px solid #c6c6c6;border-bottom-color:#b8b8b8;border-radius:2px;background:#fff;"></div>
<div class="t" style="left:878.5px;top:463.54px;font-size:10px;color:#1e1e1e;font-weight:bold;letter-spacing:0px;font-family:"Liberation Sans", sans-serif;">8660</div>
<div class="t" style="left:917.3px;top:463.34px;font-size:10px;color:#1e1e1e;font-weight:normal;letter-spacing:-0.3px;font-family:"Liberation Sans", sans-serif;">:stop frame</div>
<div class="r" style="left:981.6px;top:458.7px;width:35.0px;height:17.100000000000023px;box-sizing:border-box;border:1px solid #c3c3c3;border-radius:2px;background:linear-gradient(#f8f8f8,#e9e9e9);"></div>
<div class="t" style="left:981.6px;width:35.0px;text-align:center;top:463.34px;font-size:10px;color:#1e1e1e;font-weight:bold;letter-spacing:0px;">mark</div>
<div class="r" style="left:1018px;top:458.7px;width:92.40000000000009px;height:17.100000000000023px;box-sizing:border-box;border:1px solid #c3c3c3;border-radius:2px;background:linear-gradient(#f8f8f8,#e9e9e9);"></div>
<div class="t" style="left:1018px;width:92.40000000000009px;text-align:center;top:463.34px;font-size:10px;color:#1e1e1e;font-weight:bold;letter-spacing:0px;">Back to 'mark'</div>
<div class="r" style="left:1116.2px;top:458.7px;width:43.799999999999955px;height:17.100000000000023px;box-sizing:border-box;border:1px solid #c3c3c3;border-radius:2px;background:linear-gradient(#f8f8f8,#e9e9e9);"></div>
<div class="t" style="left:1121px;top:463.34px;font-size:10px;color:#1e1e1e;font-weight:bold;letter-spacing:0px;font-family:"Liberation Sans", sans-serif;">clear d</div>
<div class="r" style="left:444px;top:478.6px;width:708px;height:180.39999999999998px;background:#f0f0f0;"></div>
<div class="r" style="left:444px;top:479px;width:306px;height:148px;background:#fefefe;"></div>
<div class="r" style="left:753.5px;top:479px;width:398.5px;height:148px;background:#fefefe;"></div>
<div class="t" style="left:437.75px;width:200.0px;text-align:center;top:633.63px;font-size:10px;color:#1e1e1e;font-weight:normal;letter-spacing:-0.3px;">target</div>
<div class="t" style="left:864.5px;width:200.0px;text-align:center;top:633.63px;font-size:10px;color:#1e1e1e;font-weight:normal;letter-spacing:-0.3px;">Thumbnail Two (right-click here for info)</div>
<svg class="r" style="left:474.5px;top:490px" width="127" height="127"><rect width="127" height="127" fill="#080808"/><rect x="6.05" y="0.00" width="6.15" height="6.15" fill="rgb(25,25,25)"/><rect x="24.19" y="0.00" width="6.15" height="6.15" fill="rgb(16,16,16)"/><rect x="42.33" y="0.00" width="6.15" height="6.15" fill="rgb(16,16,16)"/><rect x="60.48" y="0.00" width="6.15" height="6.15" fill="rgb(25,25,25)"/><rect x="78.62" y="0.00" width="6.15" height="6.15" fill="rgb(16,16,16)"/><rect x="84.67" y="0.00" width="6.15" height="6.15" fill="rgb(25,25,25)"/><rect x="108.86" y="0.00" width="6.15" height="6.15" fill="rgb(25,25,25)"/><rect x="114.90" y="0.00" width="6.15" height="6.15" fill="rgb(16,16,16)"/><rect x="120.95" y="0.00" width="6.15" height="6.15" fill="rgb(10,10,10)"/><rect x="18.14" y="6.05" width="6.15" height="6.15" fill="rgb(25,25,25)"/><rect x="24.19" y="6.05" width="6.15" height="6.15" fill="rgb(10,10,10)"/><rect x="108.86" y="6.05" width="6.15" height="6.15" fill="rgb(16,16,16)"/><rect x="114.90" y="6.05" width="6.15" height="6.15" fill="rgb(10,10,10)"/><rect x="120.95" y="6.05" width="6.15" height="6.15" fill="rgb(10,10,10)"/><rect x="0.00" y="12.10" width="6.15" height="6.15" fill="rgb(10,10,10)"/><rect x="6.05" y="12.10" width="6.15" height="6.15" fill="rgb(16,16,16)"/><rect x="60.48" y="12.10" width="6.15" height="6.15" fill="rgb(16,16,16)"/><rect x="78.62" y="12.10" width="6.15" height="6.15" fill="rgb(10,10,10)"/><rect x="90.71" y="12.10" width="6.15" height="6.15" fill="rgb(10,10,10)"/><rect x="102.81" y="12.10" width="6.15" height="6.15" fill="rgb(25,25,25)"/><rect x="108.86" y="12.10" width="6.15" height="6.15" fill="rgb(10,10,10)"/><rect x="120.95" y="12.10" width="6.15" height="6.15" fill="rgb(25,25,25)"/><rect x="6.05" y="18.14" width="6.15" height="6.15" fill="rgb(10,10,10)"/><rect x="60.48" y="18.14" width="6.15" height="6.15" fill="rgb(25,25,25)"/><rect x="102.81" y="18.14" width="6.15" height="6.15" fill="rgb(16,16,16)"/><rect x="108.86" y="18.14" width="6.15" height="6.15" fill="rgb(16,16,16)"/><rect x="12.10" y="24.19" width="6.15" height="6.15" fill="rgb(10,10,10)"/><rect x="54.43" y="24.19" width="6.15" height="6.15" fill="rgb(10,10,10)"/><rect x="60.48" y="24.19" width="6.15" height="6.15" fill="rgb(10,10,10)"/><rect x="90.71" y="24.19" width="6.15" height="6.15" fill="rgb(10,10,10)"/><rect x="102.81" y="24.19" width="6.15" height="6.15" fill="rgb(25,25,25)"/><rect x="114.90" y="24.19" width="6.15" height="6.15" fill="rgb(25,25,25)"/><rect x="30.24" y="30.24" width="6.15" height="6.15" fill="rgb(25,25,25)"/><rect x="66.52" y="30.24" width="6.15" height="6.15" fill="rgb(10,10,10)"/><rect x="18.14" y="36.29" width="6.15" height="6.15" fill="rgb(10,10,10)"/><rect x="24.19" y="36.29" width="6.15" height="6.15" fill="rgb(10,10,10)"/><rect x="30.24" y="36.29" width="6.15" height="6.15" fill="rgb(16,16,16)"/><rect x="36.29" y="36.29" width="6.15" height="6.15" fill="rgb(25,25,25)"/><rect x="48.38" y="36.29" width="6.15" height="6.15" fill="rgb(10,10,10)"/><rect x="54.43" y="36.29" width="6.15" height="6.15" fill="rgb(25,25,25)"/><rect x="66.52" y="36.29" width="6.15" height="6.15" fill="rgb(25,25,25)"/><rect x="84.67" y="36.29" width="6.15" height="6.15" fill="rgb(10,10,10)"/><rect x="114.90" y="36.29" width="6.15" height="6.15" fill="rgb(10,10,10)"/><rect x="0.00" y="42.33" width="6.15" height="6.15" fill="rgb(25,25,25)"/><rect x="30.24" y="42.33" width="6.15" height="6.15" fill="rgb(25,25,25)"/><rect x="54.43" y="42.33" width="6.15" height="6.15" fill="rgb(10,10,10)"/><rect x="72.57" y="42.33" width="6.15" height="6.15" fill="rgb(10,10,10)"/><rect x="108.86" y="42.33" width="6.15" height="6.15" fill="rgb(16,16,16)"/><rect x="36.29" y="48.38" width="6.15" height="6.15" fill="rgb(16,16,16)"/><rect x="90.71" y="48.38" width="6.15" height="6.15" fill="rgb(16,16,16)"/><rect x="90.71" y="54.43" width="6.15" height="6.15" fill="rgb(10,10,10)"/><rect x="120.95" y="54.43" width="6.15" height="6.15" fill="rgb(25,25,25)"/><rect x="36.29" y="60.48" width="6.15" height="6.15" fill="rgb(10,10,10)"/><rect x="108.86" y="60.48" width="6.15" height="6.15" fill="rgb(16,16,16)"/><rect x="12.10" y="66.52" width="6.15" height="6.15" fill="rgb(16,16,16)"/><rect x="66.52" y="66.52" width="6.15" height="6.15" fill="rgb(25,25,25)"/><rect x="12.10" y="72.57" width="6.15" height="6.15" fill="rgb(10,10,10)"/><rect x="30.24" y="72.57" width="6.15" height="6.15" fill="rgb(25,25,25)"/><rect x="42.33" y="72.57" width="6.15" height="6.15" fill="rgb(16,16,16)"/><rect x="66.52" y="72.57" width="6.15" height="6.15" fill="rgb(10,10,10)"/><rect x="84.67" y="72.57" width="6.15" height="6.15" fill="rgb(10,10,10)"/><rect x="90.71" y="72.57" width="6.15" height="6.15" fill="rgb(10,10,10)"/><rect x="114.90" y="72.57" width="6.15" height="6.15" fill="rgb(10,10,10)"/><rect x="36.29" y="78.62" width="6.15" height="6.15" fill="rgb(16,16,16)"/><rect x="42.33" y="78.62" width="6.15" height="6.15" fill="rgb(25,25,25)"/><rect x="54.43" y="78.62" width="6.15" height="6.15" fill="rgb(10,10,10)"/><rect x="66.52" y="78.62" width="6.15" height="6.15" fill="rgb(25,25,25)"/><rect x="84.67" y="78.62" width="6.15" height="6.15" fill="rgb(16,16,16)"/><rect x="90.71" y="78.62" width="6.15" height="6.15" fill="rgb(25,25,25)"/><rect x="114.90" y="78.62" width="6.15" height="6.15" fill="rgb(25,25,25)"/><rect x="54.43" y="84.67" width="6.15" height="6.15" fill="rgb(25,25,25)"/><rect x="72.57" y="84.67" width="6.15" height="6.15" fill="rgb(10,10,10)"/><rect x="96.76" y="84.67" width="6.15" height="6.15" fill="rgb(16,16,16)"/><rect x="0.00" y="90.71" width="6.15" height="6.15" fill="rgb(25,25,25)"/><rect x="30.24" y="90.71" width="6.15" height="6.15" fill="rgb(25,25,25)"/><rect x="36.29" y="90.71" width="6.15" height="6.15" fill="rgb(25,25,25)"/><rect x="48.38" y="90.71" width="6.15" height="6.15" fill="rgb(10,10,10)"/><rect x="108.86" y="90.71" width="6.15" height="6.15" fill="rgb(25,25,25)"/><rect x="114.90" y="90.71" width="6.15" height="6.15" fill="rgb(16,16,16)"/><rect x="30.24" y="96.76" width="6.15" height="6.15" fill="rgb(25,25,25)"/><rect x="96.76" y="96.76" width="6.15" height="6.15" fill="rgb(16,16,16)"/><rect x="102.81" y="96.76" width="6.15" height="6.15" fill="rgb(10,10,10)"/><rect x="12.10" y="102.81" width="6.15" height="6.15" fill="rgb(25,25,25)"/><rect x="18.14" y="102.81" width="6.15" height="6.15" fill="rgb(25,25,25)"/><rect x="24.19" y="102.81" width="6.15" height="6.15" fill="rgb(10,10,10)"/><rect x="48.38" y="102.81" width="6.15" height="6.15" fill="rgb(16,16,16)"/><rect x="6.05" y="108.86" width="6.15" height="6.15" fill="rgb(16,16,16)"/><rect x="24.19" y="108.86" width="6.15" height="6.15" fill="rgb(25,25,25)"/><rect x="36.29" y="108.86" width="6.15" height="6.15" fill="rgb(25,25,25)"/><rect x="42.33" y="108.86" width="6.15" height="6.15" fill="rgb(16,16,16)"/><rect x="96.76" y="108.86" width="6.15" height="6.15" fill="rgb(10,10,10)"/><rect x="108.86" y="108.86" width="6.15" height="6.15" fill="rgb(10,10,10)"/><rect x="18.14" y="114.90" width="6.15" height="6.15" fill="rgb(10,10,10)"/><rect x="36.29" y="114.90" width="6.15" height="6.15" fill="rgb(25,25,25)"/><rect x="54.43" y="114.90" width="6.15" height="6.15" fill="rgb(10,10,10)"/><rect x="96.76" y="114.90" width="6.15" height="6.15" fill="rgb(16,16,16)"/><rect x="102.81" y="114.90" width="6.15" height="6.15" fill="rgb(25,25,25)"/><rect x="108.86" y="114.90" width="6.15" height="6.15" fill="rgb(10,10,10)"/><rect x="0.00" y="120.95" width="6.15" height="6.15" fill="rgb(10,10,10)"/><rect x="18.14" y="120.95" width="6.15" height="6.15" fill="rgb(16,16,16)"/><rect x="30.24" y="120.95" width="6.15" height="6.15" fill="rgb(10,10,10)"/><rect x="36.29" y="120.95" width="6.15" height="6.15" fill="rgb(10,10,10)"/><rect x="42.33" y="120.95" width="6.15" height="6.15" fill="rgb(16,16,16)"/><rect x="72.57" y="120.95" width="6.15" height="6.15" fill="rgb(25,25,25)"/><rect x="96.76" y="120.95" width="6.15" height="6.15" fill="rgb(10,10,10)"/><rect x="108.86" y="120.95" width="6.15" height="6.15" fill="rgb(10,10,10)"/><rect x="48.38" y="0.00" width="6.15" height="6.15" fill="rgb(84,84,84)"/><rect x="90.71" y="0.00" width="6.15" height="6.15" fill="rgb(105,105,105)"/><rect x="96.76" y="0.00" width="6.15" height="6.15" fill="rgb(126,126,126)"/><rect x="102.81" y="0.00" width="6.15" height="6.15" fill="rgb(84,84,84)"/><rect x="30.24" y="6.05" width="6.15" height="6.15" fill="rgb(42,42,42)"/><rect x="36.29" y="6.05" width="6.15" height="6.15" fill="rgb(42,42,42)"/><rect x="48.38" y="6.05" width="6.15" height="6.15" fill="rgb(84,84,84)"/><rect x="90.71" y="6.05" width="6.15" height="6.15" fill="rgb(105,105,105)"/><rect x="96.76" y="6.05" width="6.15" height="6.15" fill="rgb(168,168,168)"/><rect x="102.81" y="6.05" width="6.15" height="6.15" fill="rgb(126,126,126)"/><rect x="18.14" y="12.10" width="6.15" height="6.15" fill="rgb(84,84,84)"/><rect x="24.19" y="12.10" width="6.15" height="6.15" fill="rgb(63,63,63)"/><rect x="48.38" y="12.10" width="6.15" height="6.15" fill="rgb(42,42,42)"/><rect x="96.76" y="12.10" width="6.15" height="6.15" fill="rgb(63,63,63)"/><rect x="0.00" y="18.14" width="6.15" height="6.15" fill="rgb(84,84,84)"/><rect x="18.14" y="18.14" width="6.15" height="6.15" fill="rgb(126,126,126)"/><rect x="24.19" y="18.14" width="6.15" height="6.15" fill="rgb(63,63,63)"/><rect x="120.95" y="18.14" width="6.15" height="6.15" fill="rgb(63,63,63)"/><rect x="18.14" y="24.19" width="6.15" height="6.15" fill="rgb(84,84,84)"/><rect x="36.29" y="24.19" width="6.15" height="6.15" fill="rgb(84,84,84)"/><rect x="42.33" y="24.19" width="6.15" height="6.15" fill="rgb(84,84,84)"/><rect x="84.67" y="24.19" width="6.15" height="6.15" fill="rgb(63,63,63)"/><rect x="36.29" y="30.24" width="6.15" height="6.15" fill="rgb(126,126,126)"/><rect x="42.33" y="30.24" width="6.15" height="6.15" fill="rgb(147,147,147)"/><rect x="54.43" y="30.24" width="6.15" height="6.15" fill="rgb(105,105,105)"/><rect x="84.67" y="30.24" width="6.15" height="6.15" fill="rgb(63,63,63)"/><rect x="108.86" y="30.24" width="6.15" height="6.15" fill="rgb(63,63,63)"/><rect x="6.05" y="36.29" width="6.15" height="6.15" fill="rgb(84,84,84)"/><rect x="12.10" y="36.29" width="6.15" height="6.15" fill="rgb(84,84,84)"/><rect x="42.33" y="36.29" width="6.15" height="6.15" fill="rgb(147,147,147)"/><rect x="72.57" y="36.29" width="6.15" height="6.15" fill="rgb(42,42,42)"/><rect x="90.71" y="36.29" width="6.15" height="6.15" fill="rgb(63,63,63)"/><rect x="102.81" y="36.29" width="6.15" height="6.15" fill="rgb(63,63,63)"/><rect x="6.05" y="42.33" width="6.15" height="6.15" fill="rgb(126,126,126)"/><rect x="12.10" y="42.33" width="6.15" height="6.15" fill="rgb(105,105,105)"/><rect x="24.19" y="42.33" width="6.15" height="6.15" fill="rgb(63,63,63)"/><rect x="42.33" y="42.33" width="6.15" height="6.15" fill="rgb(105,105,105)"/><rect x="78.62" y="42.33" width="6.15" height="6.15" fill="rgb(84,84,84)"/><rect x="102.81" y="42.33" width="6.15" height="6.15" fill="rgb(63,63,63)"/><rect x="120.95" y="42.33" width="6.15" height="6.15" fill="rgb(126,126,126)"/><rect x="6.05" y="48.38" width="6.15" height="6.15" fill="rgb(126,126,126)"/><rect x="12.10" y="48.38" width="6.15" height="6.15" fill="rgb(126,126,126)"/><rect x="24.19" y="48.38" width="6.15" height="6.15" fill="rgb(84,84,84)"/><rect x="30.24" y="48.38" width="6.15" height="6.15" fill="rgb(63,63,63)"/><rect x="54.43" y="48.38" width="6.15" height="6.15" fill="rgb(84,84,84)"/><rect x="60.48" y="48.38" width="6.15" height="6.15" fill="rgb(63,63,63)"/><rect x="78.62" y="48.38" width="6.15" height="6.15" fill="rgb(105,105,105)"/><rect x="120.95" y="48.38" width="6.15" height="6.15" fill="rgb(105,105,105)"/><rect x="6.05" y="54.43" width="6.15" height="6.15" fill="rgb(105,105,105)"/><rect x="12.10" y="54.43" width="6.15" height="6.15" fill="rgb(84,84,84)"/><rect x="24.19" y="54.43" width="6.15" height="6.15" fill="rgb(126,126,126)"/><rect x="30.24" y="54.43" width="6.15" height="6.15" fill="rgb(168,168,168)"/><rect x="48.38" y="54.43" width="6.15" height="6.15" fill="rgb(84,84,84)"/><rect x="54.43" y="54.43" width="6.15" height="6.15" fill="rgb(210,210,210)"/><rect x="60.48" y="54.43" width="6.15" height="6.15" fill="rgb(126,126,126)"/><rect x="72.57" y="54.43" width="6.15" height="6.15" fill="rgb(105,105,105)"/><rect x="78.62" y="54.43" width="6.15" height="6.15" fill="rgb(105,105,105)"/><rect x="84.67" y="54.43" width="6.15" height="6.15" fill="rgb(84,84,84)"/><rect x="24.19" y="60.48" width="6.15" height="6.15" fill="rgb(84,84,84)"/><rect x="48.38" y="60.48" width="6.15" height="6.15" fill="rgb(63,63,63)"/><rect x="54.43" y="60.48" width="6.15" height="6.15" fill="rgb(147,147,147)"/><rect x="60.48" y="60.48" width="6.15" height="6.15" fill="rgb(168,168,168)"/><rect x="78.62" y="60.48" width="6.15" height="6.15" fill="rgb(84,84,84)"/><rect x="84.67" y="60.48" width="6.15" height="6.15" fill="rgb(84,84,84)"/><rect x="90.71" y="60.48" width="6.15" height="6.15" fill="rgb(63,63,63)"/><rect x="18.14" y="66.52" width="6.15" height="6.15" fill="rgb(63,63,63)"/><rect x="42.33" y="66.52" width="6.15" height="6.15" fill="rgb(63,63,63)"/><rect x="48.38" y="66.52" width="6.15" height="6.15" fill="rgb(63,63,63)"/><rect x="60.48" y="66.52" width="6.15" height="6.15" fill="rgb(168,168,168)"/><rect x="84.67" y="66.52" width="6.15" height="6.15" fill="rgb(126,126,126)"/><rect x="90.71" y="66.52" width="6.15" height="6.15" fill="rgb(126,126,126)"/><rect x="96.76" y="66.52" width="6.15" height="6.15" fill="rgb(84,84,84)"/><rect x="24.19" y="72.57" width="6.15" height="6.15" fill="rgb(84,84,84)"/><rect x="48.38" y="72.57" width="6.15" height="6.15" fill="rgb(63,63,63)"/><rect x="60.48" y="72.57" width="6.15" height="6.15" fill="rgb(126,126,126)"/><rect x="78.62" y="72.57" width="6.15" height="6.15" fill="rgb(63,63,63)"/><rect x="102.81" y="72.57" width="6.15" height="6.15" fill="rgb(105,105,105)"/><rect x="108.86" y="72.57" width="6.15" height="6.15" fill="rgb(105,105,105)"/><rect x="6.05" y="78.62" width="6.15" height="6.15" fill="rgb(63,63,63)"/><rect x="12.10" y="78.62" width="6.15" height="6.15" fill="rgb(63,63,63)"/><rect x="24.19" y="78.62" width="6.15" height="6.15" fill="rgb(84,84,84)"/><rect x="30.24" y="78.62" width="6.15" height="6.15" fill="rgb(147,147,147)"/><rect x="48.38" y="78.62" width="6.15" height="6.15" fill="rgb(84,84,84)"/><rect x="60.48" y="78.62" width="6.15" height="6.15" fill="rgb(84,84,84)"/><rect x="102.81" y="78.62" width="6.15" height="6.15" fill="rgb(147,147,147)"/><rect x="108.86" y="78.62" width="6.15" height="6.15" fill="rgb(126,126,126)"/><rect x="24.19" y="84.67" width="6.15" height="6.15" fill="rgb(105,105,105)"/><rect x="42.33" y="84.67" width="6.15" height="6.15" fill="rgb(84,84,84)"/><rect x="60.48" y="84.67" width="6.15" height="6.15" fill="rgb(126,126,126)"/><rect x="78.62" y="84.67" width="6.15" height="6.15" fill="rgb(84,84,84)"/><rect x="102.81" y="84.67" width="6.15" height="6.15" fill="rgb(84,84,84)"/><rect x="108.86" y="84.67" width="6.15" height="6.15" fill="rgb(105,105,105)"/><rect x="24.19" y="90.71" width="6.15" height="6.15" fill="rgb(105,105,105)"/><rect x="42.33" y="90.71" width="6.15" height="6.15" fill="rgb(126,126,126)"/><rect x="60.48" y="90.71" width="6.15" height="6.15" fill="rgb(126,126,126)"/><rect x="66.52" y="90.71" width="6.15" height="6.15" fill="rgb(63,63,63)"/><rect x="78.62" y="90.71" width="6.15" height="6.15" fill="rgb(126,126,126)"/><rect x="102.81" y="90.71" width="6.15" height="6.15" fill="rgb(63,63,63)"/><rect x="24.19" y="96.76" width="6.15" height="6.15" fill="rgb(63,63,63)"/><rect x="42.33" y="96.76" width="6.15" height="6.15" fill="rgb(63,63,63)"/><rect x="60.48" y="96.76" width="6.15" height="6.15" fill="rgb(63,63,63)"/><rect x="66.52" y="96.76" width="6.15" height="6.15" fill="rgb(63,63,63)"/><rect x="72.57" y="96.76" width="6.15" height="6.15" fill="rgb(63,63,63)"/><rect x="108.86" y="96.76" width="6.15" height="6.15" fill="rgb(84,84,84)"/><rect x="30.24" y="102.81" width="6.15" height="6.15" fill="rgb(147,147,147)"/><rect x="36.29" y="102.81" width="6.15" height="6.15" fill="rgb(63,63,63)"/><rect x="54.43" y="102.81" width="6.15" height="6.15" fill="rgb(63,63,63)"/><rect x="66.52" y="102.81" width="6.15" height="6.15" fill="rgb(63,63,63)"/><rect x="72.57" y="102.81" width="6.15" height="6.15" fill="rgb(84,84,84)"/><rect x="108.86" y="102.81" width="6.15" height="6.15" fill="rgb(84,84,84)"/><rect x="114.90" y="102.81" width="6.15" height="6.15" fill="rgb(63,63,63)"/><rect x="30.24" y="108.86" width="6.15" height="6.15" fill="rgb(84,84,84)"/><rect x="48.38" y="108.86" width="6.15" height="6.15" fill="rgb(84,84,84)"/><rect x="78.62" y="108.86" width="6.15" height="6.15" fill="rgb(84,84,84)"/><rect x="84.67" y="108.86" width="6.15" height="6.15" fill="rgb(84,84,84)"/><rect x="102.81" y="108.86" width="6.15" height="6.15" fill="rgb(63,63,63)"/><rect x="48.38" y="114.90" width="6.15" height="6.15" fill="rgb(126,126,126)"/><rect x="78.62" y="114.90" width="6.15" height="6.15" fill="rgb(105,105,105)"/><rect x="84.67" y="114.90" width="6.15" height="6.15" fill="rgb(126,126,126)"/><rect x="120.95" y="114.90" width="6.15" height="6.15" fill="rgb(105,105,105)"/><rect x="48.38" y="120.95" width="6.15" height="6.15" fill="rgb(63,63,63)"/><rect x="84.67" y="120.95" width="6.15" height="6.15" fill="rgb(84,84,84)"/><rect x="120.95" y="120.95" width="6.15" height="6.15" fill="rgb(84,84,84)"/><path d="M0 0 L127 127 M127 0 L0 127" stroke="#a09e86" stroke-width="1"/></svg>
<svg class="r" style="left:444px;top:479px" width="306" height="148"><path d="M20 0.5 L30.5 11 M167.5 0.5 L157 11 M30.5 137.8 L20 148 M157 137.8 L167.5 148" stroke="#e2e2e2" stroke-width="1"/></svg>
<svg class="r" style="left:901px;top:490.4px" width="127" height="126.2"><rect width="127" height="126.2" fill="#ffa500"/><rect x="47.77" y="48.30" width="6.1" height="6.1" fill="#202530"/><rect x="53.79" y="48.30" width="6.1" height="6.1" fill="#303540"/><rect x="59.81" y="48.30" width="6.1" height="6.1" fill="#202830"/><rect x="41.75" y="54.32" width="6.1" height="6.1" fill="#111"/><rect x="47.77" y="54.32" width="6.1" height="6.1" fill="#888"/><rect x="53.79" y="54.32" width="6.1" height="6.1" fill="#fff"/><rect x="59.81" y="54.32" width="6.1" height="6.1" fill="#aaa"/><rect x="65.83" y="54.32" width="6.1" height="6.1" fill="#111"/><rect x="41.75" y="60.34" width="6.1" height="6.1" fill="#111"/><rect x="47.77" y="60.34" width="6.1" height="6.1" fill="#555"/><rect x="53.79" y="60.34" width="6.1" height="6.1" fill="#999"/><rect x="59.81" y="60.34" width="6.1" height="6.1" fill="#bbb"/><rect x="65.83" y="60.34" width="6.1" height="6.1" fill="#111"/><rect x="41.75" y="66.36" width="6.1" height="6.1" fill="#111"/><rect x="47.77" y="66.36" width="6.1" height="6.1" fill="#333"/><rect x="53.79" y="66.36" width="6.1" height="6.1" fill="#555"/><rect x="59.81" y="66.36" width="6.1" height="6.1" fill="#ccc"/><rect x="65.83" y="66.36" width="6.1" height="6.1" fill="#111"/><rect x="47.77" y="72.38" width="6.1" height="6.1" fill="#222"/><rect x="53.79" y="72.38" width="6.1" height="6.1" fill="#222"/><rect x="59.81" y="72.38" width="6.1" height="6.1" fill="#777"/></svg>
</body></html>
